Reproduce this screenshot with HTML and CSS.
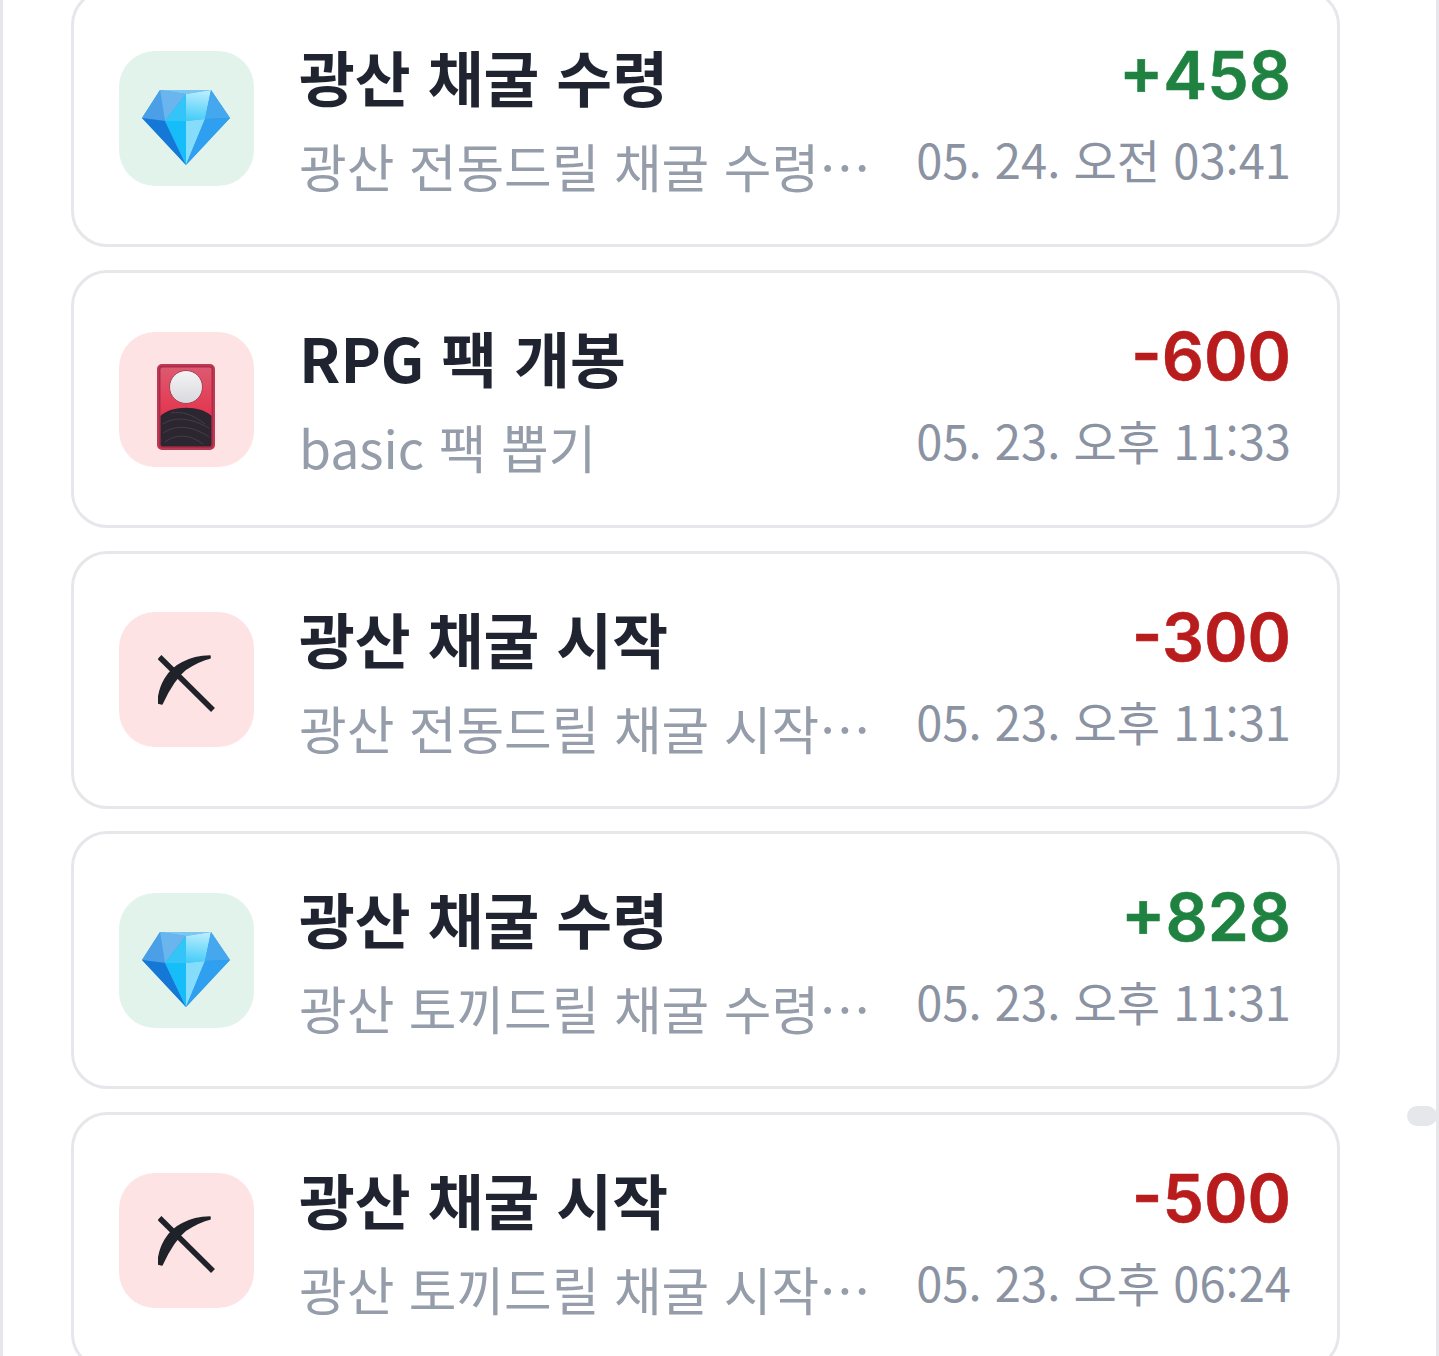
FILE: index.html
```html
<!DOCTYPE html>
<html lang="ko">
<head>
  <meta charset="UTF-8">
  <meta name="viewport" content="width=device-width, initial-scale=1">
  <title>포인트 내역</title>
  <link rel="stylesheet" href="styles.css">
</head>
<body>

  <svg class="defs" width="0" height="0" aria-hidden="true">
    <defs>
      <linearGradient id="packbg" x1="0" y1="0" x2="0" y2="1">
        <stop offset="0" stop-color="#dc5a70"/>
        <stop offset="0.6" stop-color="#e5354f"/>
      </linearGradient>
      <linearGradient id="moon" x1="0" y1="0" x2="0" y2="1">
        <stop offset="0" stop-color="#f4f4f5"/>
        <stop offset="1" stop-color="#d9d9de"/>
      </linearGradient>
      <linearGradient id="shine" x1="0.6" y1="0" x2="0.5" y2="1">
        <stop offset="0" stop-color="#bdeefd"/>
        <stop offset="1" stop-color="#45cdf9"/>
      </linearGradient>
    </defs>
    <symbol id="gem" viewBox="0 0 88 75">
      <polygon points="18,0 69,0 88,28 44,75 0,28" fill="#2f9be8"/>
      <polygon points="18,0 0,28 23,31" fill="#4a9fe6"/>
      <polygon points="18,0 44,4 23,31" fill="#6ab5ee"/>
      <polygon points="44,4 18,0 69,0" fill="#7cc6f3"/>
      <polygon points="44,4 69,0 63,29 44,31" fill="url(#shine)"/>
      <polygon points="69,0 88,28 63,29" fill="#45a8ee"/>
      <polygon points="44,4 44,31 23,31" fill="#33c5f8"/>
      <polygon points="0,28 23,31 44,75" fill="#1577d6"/>
      <polygon points="23,31 44,31 44,75" fill="#17bdf9"/>
      <polygon points="44,31 63,29 44,75" fill="#86dcfb"/>
      <polygon points="63,29 88,28 44,75" fill="#2f9ff0"/>
    </symbol>
    <symbol id="pick" viewBox="0 0 58 58">
      <path d="M1.500 2 L55 55" fill="none" stroke="#1f2229" stroke-width="5.500"/>
      <path d="M0 48 C1 30 10 15 24 8 C33 3 43 1 52 1 L52 3 C43 5 36 9 28 14 C18 22 10 36 4 49 Z" fill="#1f2229" stroke="#1f2229" stroke-width="1.500" stroke-linejoin="round"/>
    </symbol>
    <symbol id="pack" viewBox="0 0 58 86">
      <rect x="1" y="1" width="56" height="84" rx="4" fill="#b02a48" stroke="#b83a55" stroke-width="2"/>
      <rect x="3.500" y="3.500" width="51" height="79" rx="2" fill="url(#packbg)"/>
      <circle cx="29" cy="23" r="16.500" fill="url(#moon)" stroke="#a8404f" stroke-width="1"/>
      <path d="M3.500 52 C14 41 44 41 54.500 52 V80.500 a2 2 0 0 1 -2 2 H5.500 a2 2 0 0 1 -2 -2 Z" fill="#2b2630"/>
      <path d="M6 60 C18 52 34 54 52 64 M6 69 C20 60 36 62 52 73 M8 78 C20 69 34 71 46 80 M14 49 C26 47 36 51 48 60" fill="none" stroke="#453e4a" stroke-width="1"/>
    </symbol>
  </svg>

  <div class="frame">
    <ul class="history">
      <li class="card">
        <div class="icon green"><svg class="gem"><use href="#gem"/></svg></div>
        <div class="info">
          <div class="row">
            <span class="title">광산 채굴 수령</span>
            <span class="amount plus">+458</span>
          </div>
          <div class="row sub-row">
            <span class="desc">광산 전동드릴 채굴 수령…</span>
            <span class="date">05. 24. 오전 03:41</span>
          </div>
        </div>
      </li>
      <li class="card">
        <div class="icon red"><svg class="pack"><use href="#pack"/></svg></div>
        <div class="info">
          <div class="row">
            <span class="title">RPG 팩 개봉</span>
            <span class="amount minus">-600</span>
          </div>
          <div class="row sub-row">
            <span class="desc">basic 팩 뽑기</span>
            <span class="date">05. 23. 오후 11:33</span>
          </div>
        </div>
      </li>
      <li class="card">
        <div class="icon red"><svg class="pick"><use href="#pick"/></svg></div>
        <div class="info">
          <div class="row">
            <span class="title">광산 채굴 시작</span>
            <span class="amount minus">-300</span>
          </div>
          <div class="row sub-row">
            <span class="desc">광산 전동드릴 채굴 시작…</span>
            <span class="date">05. 23. 오후 11:31</span>
          </div>
        </div>
      </li>
      <li class="card">
        <div class="icon green"><svg class="gem"><use href="#gem"/></svg></div>
        <div class="info">
          <div class="row">
            <span class="title">광산 채굴 수령</span>
            <span class="amount plus">+828</span>
          </div>
          <div class="row sub-row">
            <span class="desc">광산 토끼드릴 채굴 수령…</span>
            <span class="date">05. 23. 오후 11:31</span>
          </div>
        </div>
      </li>
      <li class="card">
        <div class="icon red"><svg class="pick"><use href="#pick"/></svg></div>
        <div class="info">
          <div class="row">
            <span class="title">광산 채굴 시작</span>
            <span class="amount minus">-500</span>
          </div>
          <div class="row sub-row">
            <span class="desc">광산 토끼드릴 채굴 시작…</span>
            <span class="date">05. 23. 오후 06:24</span>
          </div>
        </div>
      </li>
    </ul>
    <div class="thumb"></div>
  </div>

</body>
</html>
```

FILE: styles.css
```css
html, body {
  margin: 0;
  height: 100%;
  overflow: hidden;
  background: #fff;
}
body {
  font-family: "Noto Sans CJK KR", "Noto Sans", sans-serif;
}
.defs {
  position: absolute;
}
.frame {
  position: relative;
  box-sizing: border-box;
  height: 1356px;
  overflow: hidden;
  border-left: 3px solid #e5e7eb;
  border-right: 3px solid #e5e7eb;
}
.history {
  list-style: none;
  margin: -10.6px 0 0;
  padding: 0 96px 0 68px;
  display: flex;
  flex-direction: column;
  gap: 22.6px;
}
.card {
  box-sizing: border-box;
  height: 258px;
  flex: none;
  display: flex;
  align-items: center;
  gap: 45px;
  padding: 0 46px 0 45px;
  background: #fff;
  border: 3px solid #e5e7eb;
  border-radius: 36px;
}
.icon {
  width: 135px;
  height: 135px;
  flex: none;
  display: flex;
  align-items: center;
  justify-content: center;
  border-radius: 36px;
}
.icon.green {
  background: #e2f3ec;
}
.icon.red {
  background: #fde3e3;
}
.gem {
  width: 88px;
  height: 75px;
  margin: 19px 2px 0 0;
}
.pick {
  width: 58px;
  height: 58px;
  margin-top: 8px;
}
.pack {
  width: 58px;
  height: 86px;
  margin: 15px 2px 0 0;
}
.info {
  flex: 1;
  min-width: 0;
  display: flex;
  flex-direction: column;
  gap: 27px;
  padding-top: 5px;
}
.row {
  display: flex;
  justify-content: space-between;
  align-items: flex-start;
  height: 62px;
}
.title {
  font-size: 60.7px;
  line-height: 62px;
  font-weight: 700;
  color: #1f2430;
}
.amount {
  font-family: "Inter", "Noto Sans", sans-serif;
  font-size: 66px;
  line-height: 60px;
  font-weight: 600;
  white-space: nowrap;
  -webkit-text-stroke: 0.5px currentColor;
}
.plus {
  color: #1f8240;
}
.minus {
  color: #b91c1c;
}
.desc {
  white-space: nowrap;
  font-size: 51.8px;
  line-height: 64px;
  color: #959caa;
}
.date {
  white-space: nowrap;
  font-size: 47.1px;
  line-height: 49px;
  color: #8b93a3;
}
.thumb {
  position: absolute;
  right: -1px;
  top: 1106px;
  width: 30px;
  height: 20px;
  border-radius: 10px;
  background: #e5e7eb;
}
```
